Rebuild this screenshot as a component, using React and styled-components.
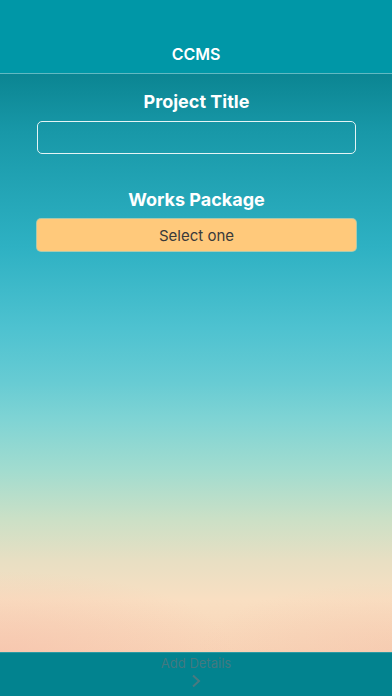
import React from "react";
import styled, { createGlobalStyle } from "styled-components";

const Global = createGlobalStyle`
  html, body { margin: 0; padding: 0; }
  body { font-family: Inter, "Liberation Sans", Arial, sans-serif; }
  * { box-sizing: border-box; }
`;

const Screen = styled.div`
  width: 392px;
  height: 696px;
  display: flex;
  flex-direction: column;
  overflow: hidden;
`;

const Header = styled.header`
  height: 74px;
  flex: none;
  background: #0097a7;
  border-bottom: 1px solid #62b9c2;
  display: flex;
  align-items: flex-end;
  justify-content: center;
  padding-bottom: 9px;
`;

const HeaderTitle = styled.h1`
  margin: 0;
  color: #ffffff;
  font-size: 16px;
  font-weight: 600;
  line-height: 20px;
`;

const Main = styled.main`
  flex: 1;
  display: flex;
  flex-direction: column;
  padding: 17px 36px 0 37px;
  background:
    radial-gradient(ellipse 60% 14% at 0% 100%, rgba(246, 190, 170, 0.55), rgba(246, 190, 170, 0)),
    radial-gradient(ellipse 50% 12% at 100% 100%, rgba(244, 196, 172, 0.45), rgba(244, 196, 172, 0)),
    linear-gradient(
      to bottom,
      #0b8592 0%,
      #1898a8 10%,
      #2eb1c3 30%,
      #4ec2d0 44%,
      #66cbd3 53%,
      #80d4d4 60%,
      #a2dccf 68.6%,
      #cbe0c6 77%,
      #e7dfc3 84%,
      #f9dfc2 91%,
      #f8d3b6 100%
    );
`;

const Label = styled.div`
  color: #ffffff;
  font-size: 18px;
  font-weight: 700;
  text-align: center;
  line-height: 22px;
  margin-top: ${(p) => p.$mt || 0}px;
`;

const TextBox = styled.div`
  margin-top: 8px;
  height: 33px;
  border: 1.5px solid #e4f4f5;
  border-radius: 5px;
`;

const SelectButton = styled.button`
  margin-top: 8px;
  height: 32px;
  border: none;
  border-radius: 4px;
  background: #ffc97b;
  color: #3a3a3a;
  font-family: Inter, "Liberation Sans", Arial, sans-serif;
  font-size: 15px;
  padding: 0;
  box-shadow: 0 0 0 1px rgba(255, 220, 160, 0.6);
`;

const Footer = styled.footer`
  height: 44px;
  flex: none;
  background: #02838f;
  border-top: 1px solid #2a9aa3;
  display: flex;
  flex-direction: column;
  align-items: center;
  padding-top: 3px;
`;

const FooterText = styled.div`
  color: #437980;
  font-size: 13px;
  line-height: 15px;
`;

const Chevron = styled.svg`
  margin-top: 3px;
`;

export default function App() {
  return (
    <>
      <Global />
      <Screen>
        <Header>
          <HeaderTitle>CCMS</HeaderTitle>
        </Header>
        <Main>
          <Label>Project Title</Label>
          <TextBox />
          <Label $mt={35}>Works Package</Label>
          <SelectButton>Select one</SelectButton>
        </Main>
        <Footer>
          <FooterText>Add Details</FooterText>
          <Chevron width="10" height="14" viewBox="0 0 10 14">
            <path d="M2 1.5 L8 7 L2 12.5" fill="none" stroke="#4a7a80" strokeWidth="2" />
          </Chevron>
        </Footer>
      </Screen>
    </>
  );
}
